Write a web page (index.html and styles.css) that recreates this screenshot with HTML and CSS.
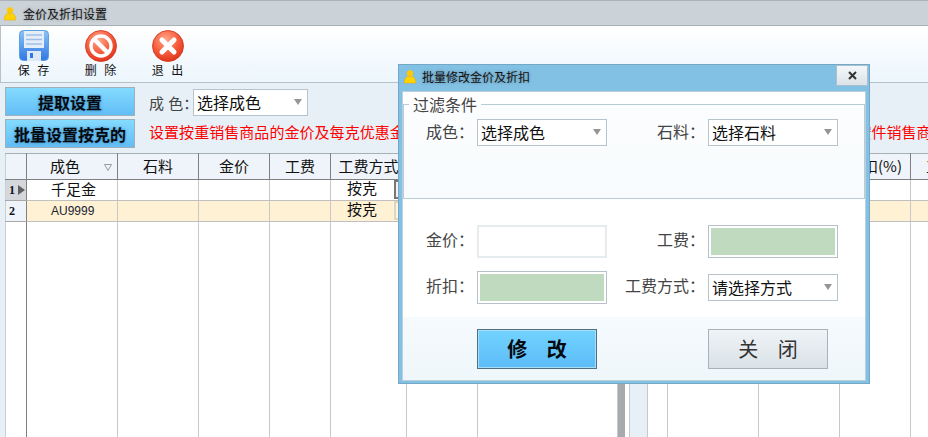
FILE: index.html
```html
<!DOCTYPE html>
<html lang="zh-CN">
<head>
<meta charset="utf-8">
<title>金价及折扣设置</title>
<link rel="stylesheet" href="styles.css">
</head>
<body>
<svg class="defs" width="0" height="0" aria-hidden="true">
  <defs>
    <symbol id="user" viewBox="0 0 16 16">
      <circle cx="8" cy="4.500" r="3.600" fill="#ffc800"/>
      <path d="M1.500 15.500C1.500 10.500 4 8 6 7.500L8 9l2-1.500C12 8 14.500 10.500 14.500 15.500Z" fill="#ffd400" stroke="#e9a800" stroke-width=".6"/>
    </symbol>
    <linearGradient id="floppyBody" x1="0" y1="0" x2="0" y2="1">
      <stop offset="0" stop-color="#8cc4f4"/><stop offset="1" stop-color="#2f77e4"/>
    </linearGradient>
    <radialGradient id="redBall" cx=".42" cy=".3" r=".8">
      <stop offset="0" stop-color="#ffa889"/><stop offset=".55" stop-color="#f4593a"/><stop offset="1" stop-color="#d92a12"/>
    </radialGradient>
  </defs>
</svg>

<header class="titlebar">
  <svg class="title-icon"><use href="#user"/></svg>
  <span class="title-text">金价及折扣设置</span>
</header>

<nav class="toolbar">
  <div class="tool">
    <svg class="tool-icon" viewBox="0 0 32 32">
      <rect x="1.500" y=".5" width="29" height="30" rx="4" fill="url(#floppyBody)" stroke="#5a9ee6"/>
      <rect x="6" y="1" width="20" height="17" fill="#e4eef9"/>
      <path d="M8 5h16M8 9.500h16M8 14h16" stroke="#9dbfe6" stroke-width="1.400"/>
      <rect x="9" y="21" width="14" height="10" fill="#dce9f7"/>
      <rect x="12" y="23" width="3" height="5" fill="#2f77e4"/>
    </svg>
    <span class="tool-label">保 存</span>
  </div>
  <div class="tool">
    <svg class="tool-icon" viewBox="0 0 32 32">
      <circle cx="16" cy="16" r="15.500" fill="url(#redBall)" stroke="#d2331c" stroke-width=".8"/>
      <circle cx="16" cy="16" r="10" fill="none" stroke="#fff" stroke-width="3.400"/>
      <path d="M9 9L23 23" stroke="#fff" stroke-width="4.400"/>
    </svg>
    <span class="tool-label">删 除</span>
  </div>
  <div class="tool">
    <svg class="tool-icon" viewBox="0 0 32 32">
      <circle cx="16" cy="16" r="15.500" fill="url(#redBall)" stroke="#d2331c" stroke-width=".8"/>
      <path d="M10 10L22 22M22 10L10 22" stroke="#fff" stroke-width="5" stroke-linecap="round"/>
    </svg>
    <span class="tool-label">退 出</span>
  </div>
</nav>

<section class="filters">
  <div class="side-buttons">
    <button class="blue-btn">提取设置</button>
    <button class="blue-btn">批量设置按克的</button>
  </div>
  <div class="filter-main">
    <div class="filter-row">
      <span class="filter-label">成 色：</span>
      <div class="select select-top">选择成色<i class="arrow"></i></div>
    </div>
    <p class="notice">设置按重销售商品的金价及每克优惠金额，及按克销售商品的工费和工费方式，同时可设置不同成色的金价按件销售商品的折扣</p>
  </div>
</section>

<main class="grid-wrap">
  <table class="grid">
    <colgroup>
      <col class="c-row"><col class="c-a"><col class="c-b"><col class="c-c"><col class="c-d"><col class="c-e"><col class="c-f"><col class="c-g"><col class="c-bar"><col class="c-gap"><col class="c-blue"><col class="c-h"><col class="c-i"><col class="c-j"><col class="c-k"><col class="c-l">
    </colgroup>
    <thead>
      <tr>
        <th></th>
        <th class="sortable">成色<svg class="sort" viewBox="0 0 8 7"><path d="M.5.500h7L4 6.500Z" fill="none" stroke="#999"/></svg></th>
        <th>石料</th><th>金价</th><th>工费</th><th>工费方式</th><th></th><th></th>
        <th class="bar"></th><th></th><th class="blue"></th><th></th><th></th><th></th><th>折扣(%)</th><th class="last">工费</th>
      </tr>
    </thead>
    <tbody>
      <tr class="row-one">
        <th class="row-head"><span class="row-no">1</span><i class="row-mark"></i></th>
        <td class="name">千足金</td><td></td><td></td><td></td>
        <td><div class="method">按克<i class="mini"></i></div></td>
        <td></td><td></td><td class="bar"></td><td></td><td class="blue"></td><td></td><td></td><td></td><td></td><td></td>
      </tr>
      <tr class="row-two">
        <th class="row-head"><span class="row-no">2</span></th>
        <td class="name latin">AU9999</td><td></td><td></td><td></td>
        <td><div class="method">按克<i class="mini"></i></div></td>
        <td></td><td></td><td class="bar"></td><td></td><td class="blue"></td><td></td><td></td><td></td><td></td><td></td>
      </tr>
      <tr class="filler">
        <th class="row-head"></th>
        <td></td><td></td><td></td><td></td><td></td><td></td><td></td><td class="bar"></td><td></td><td class="blue"></td><td></td><td></td><td></td><td></td><td></td>
      </tr>
    </tbody>
  </table>
</main>

<aside class="dialog">
  <div class="dialog-title">
    <svg class="title-icon"><use href="#user"/></svg>
    <span class="title-text">批量修改金价及折扣</span>
    <button class="close" aria-label="关闭">
      <svg viewBox="0 0 9 9" class="close-icon"><path d="M1 1L8 8M8 1L1 8" stroke="#333" stroke-width="2"/></svg>
    </button>
  </div>
  <div class="dialog-body">
    <fieldset class="group">
      <legend>过滤条件</legend>
      <div class="form-grid">
        <label>成色：</label>
        <div class="select">选择成色<i class="arrow"></i></div>
        <label>石料：</label>
        <div class="select">选择石料<i class="arrow"></i></div>
      </div>
    </fieldset>
    <div class="form-grid values">
      <label>金价：</label>
      <input class="input" type="text">
      <label>工费：</label>
      <input class="input green" type="text">
      <label>折扣：</label>
      <input class="input green" type="text">
      <label>工费方式：</label>
      <div class="select">请选择方式<i class="arrow"></i></div>
    </div>
    <div class="dialog-foot">
      <button class="foot-btn primary">修 改</button>
      <button class="foot-btn plain">关 闭</button>
    </div>
  </div>
</aside>
</body>
</html>
```

FILE: styles.css
```css
* { box-sizing: border-box; }
html, body { margin: 0; height: 100%; }
body {
  position: relative;
  width: 928px;
  height: 437px;
  overflow: hidden;
  background: #e8f0f7;
  font-family: "Noto Sans CJK SC", "Liberation Sans", sans-serif;
  color: #111;
  display: flex;
  flex-direction: column;
}
.defs { position: absolute; }

.titlebar {
  height: 26px;
  flex: none;
  display: flex;
  align-items: center;
  padding-left: 3px;
  gap: 6px;
  background: #ccd3d8;
  border-top: 1px solid #aab2b8;
  border-bottom: 1px solid #a9b1b6;
}
.title-icon { width: 14px; height: 17px; flex: none; }
.title-text {
  font-size: 12px;
  color: #111;
  text-shadow: 0 0 3px rgba(60, 70, 80, .55);
}

.toolbar {
  height: 57px;
  flex: none;
  display: flex;
  padding-top: 4px;
  background: linear-gradient(#ffffff, #ecf6fd);
  border-left: 1px solid #b8c2c8;
  border-bottom: 1px solid #b6c0c6;
}
.tool {
  width: 67px;
  display: flex;
  flex-direction: column;
  align-items: center;
}
.tool:first-child { margin-left: -1px; }
.tool-icon { width: 32px; height: 32px; flex: none; }
.tool-label {
  margin-top: 0;
  font-size: 12px;
  line-height: 16px;
  word-spacing: 5px;
  color: #111;
}

.filters {
  flex: none;
  height: 70px;
  display: flex;
  gap: 14px;
  padding: 4px 0 0 5px;
  overflow: hidden;
}
.side-buttons { width: 130px; flex: none; display: flex; flex-direction: column; gap: 3px; }
.blue-btn {
  width: 130px;
  height: 29px;
  padding: 0;
  border: 1px solid #a0b0ba;
  background: linear-gradient(#84dbff, #62bdf5);
  font: 700 16px/1 "Noto Sans CJK SC", sans-serif;
  color: #050a10;
  text-shadow: 0 0 3px rgba(0, 60, 110, .55);
}
.filter-main { flex: 1; min-width: 0; }
.filter-row { display: flex; align-items: center; margin-top: 2px; height: 27px; }
.filter-label { font-size: 15px; color: #444; width: 44px; white-space: nowrap; word-spacing: 1px; }
.notice {
  margin: 5px 0 0;
  font-size: 15px;
  line-height: 22px;
  letter-spacing: .05px;
  color: #f00;
  white-space: nowrap;
}

.select {
  position: relative;
  display: flex;
  align-items: center;
  width: 130px;
  height: 27px;
  padding: 0 0 1px 3px;
  font-size: 16px;
  color: #111;
  background: #fff;
  border: 1px solid #b8c4cc;
}
.select-top { width: 115px; }
.arrow {
  position: absolute;
  right: 5px;
  top: 9px;
  border: 4px solid transparent;
  border-top: 6px solid #959595;
  border-bottom: 0;
}

.grid-wrap {
  flex: 1;
  min-height: 0;
  padding-left: 5px;
  overflow: hidden;
}
.grid {
  table-layout: fixed;
  width: 996px;
  border-collapse: collapse;
  background: #fff;
  font-size: 15px;
}
.c-row { width: 21px; }
.c-a { width: 91px; }
.c-b { width: 81px; }
.c-c { width: 71px; }
.c-d { width: 61px; }
.c-e { width: 76px; }
.c-f { width: 71px; }
.c-g { width: 140px; }
.c-bar { width: 7px; }
.c-gap { width: 5px; }
.c-blue { width: 18px; }
.c-h { width: 20px; }
.c-i { width: 91px; }
.c-j { width: 81px; }
.c-k { width: 71px; }
.c-l { width: 91px; }

.grid thead th {
  height: 26px;
  padding: 0 0 3px;
  font-weight: 400;
  background: #eef4f9;
  border-top: 1px solid #a8b0b6;
  border-right: 1px solid #808080;
  border-bottom: 1px solid #808080;
  white-space: nowrap;
  overflow: hidden;
}
.grid thead th:first-child { border-left: 1px solid #c8d0d6; }
.grid thead .last { text-align: left; padding-left: 15px; }
.grid thead .sortable { position: relative; padding-right: 14px; }
.sort { position: absolute; right: 5px; top: 10px; width: 8px; height: 7px; }

.grid td {
  height: 21px;
  padding: 0;
  border-right: 1px solid #c8c8c8;
  border-bottom: 1px solid #c0c0c0;
}
.row-head {
  height: 21px;
  padding: 0 0 0 2px;
  border-left: 1px solid #c8d0d6;
  border-right: 1px solid #808080;
  border-bottom: 1px solid #a8a8a8;
  background: #eef4f9;
  text-align: left;
  font-size: 0;
}
.row-one .row-head { background: #d4d8dc; }
.row-two td { background: #fff2d4; }
.row-no { display: inline-block; font: 700 12px/16px "Liberation Serif", serif; color: #112; width: 10px; padding-left: 1px; vertical-align: middle; }
.row-mark {
  display: inline-block;
  vertical-align: middle;
  border: 5px solid transparent;
  border-left: 7px solid #606060;
  border-right: 0;
}
.grid .name { padding: 0 0 3px 24px; line-height: 1; white-space: nowrap; }
.grid .latin { padding-bottom: 0; font-family: "Liberation Sans", sans-serif; font-size: 12px; color: #223; }
.method {
  display: flex;
  justify-content: space-between;
  align-items: flex-start;
  padding-left: 16px;
  height: 20px;
  line-height: 16px;
}
.mini { width: 12px; height: 19px; background: #f2f2f2; border: 2px solid #777; border-right: 0; }
.row-two .mini { background: #fff6e2; border-color: #ded6c0; }
.grid .bar { background: #a6aaae; border-right: 0; border-bottom: 0; }
.grid .blue { background: #e8f0f7; border-left: 1px solid #c0ced8; border-bottom: 0; }
.grid .filler td { height: 216px; border-bottom: 0; }
.filler .row-head { border-bottom: 0; background: #fff; }

.dialog {
  position: absolute;
  left: 398px;
  top: 64px;
  width: 472px;
  height: 320px;
  display: flex;
  flex-direction: column;
  background: #82c1e3;
  border: 1px solid #74a8c6;
  padding: 0 3px 2px;
}
.dialog-title {
  position: relative;
  height: 26px;
  flex: none;
  display: flex;
  align-items: center;
  gap: 5px;
  padding: 0 0 3px 1px;
}
.close {
  position: absolute;
  right: -2px;
  top: 0;
  width: 32px;
  height: 21px;
  padding: 0;
  display: flex;
  align-items: center;
  justify-content: center;
  background: linear-gradient(#f4f7f9, #dbe3e8);
  border: 1px solid #a9c0ce;
}
.close-icon { width: 9px; height: 9px; }
.dialog-body {
  flex: 1;
  display: flex;
  flex-direction: column;
  background: #fff;
  border: 1px solid #bcd0dc;
}
.group {
  margin: 3px 0 0;
  padding: 6px 0 0;
  min-width: 0;
  height: 104px;
  flex: none;
  background: linear-gradient(#fcfdfe, #f7fbfd);
  border: 1px solid #b8ccd8;
}
.group legend {
  margin-left: 5px;
  padding: 0 4px;
  font-size: 16px;
  line-height: 18px;
  color: #444;
}
.form-grid {
  display: grid;
  grid-template-columns: 73px 130px 101px 130px;
  align-items: center;
}
.form-grid label {
  font-size: 16px;
  color: #444;
  text-align: right;
  white-space: nowrap;
  padding: 0 3px 3px 0;
}
.values {
  margin: 26px 0 0 1px;
  row-gap: 13px;
}
.values label { padding-bottom: 6px; }
.input {
  width: 130px;
  height: 33px;
  margin: 0;
  background: #fff;
  border: 2px solid #e6ecee;
  outline: 0;
}
.green {
  background: #c0dac0;
  border: 1px solid #b8c0ca;
  box-shadow: inset 0 0 0 2px #fff;
}
.dialog-foot {
  margin-top: auto;
  height: 63px;
  flex: none;
  display: flex;
  gap: 111px;
  padding: 12px 0 0 74px;
  background: linear-gradient(#f5fafd, #eff7fb);
}
.foot-btn {
  width: 120px;
  height: 40px;
  padding: 0;
  font-size: 20px;
  font-family: "Noto Sans CJK SC", sans-serif;
  line-height: 1;
  word-spacing: 15px;
}
.primary {
  font-weight: 700;
  color: #050a10;
  background: linear-gradient(#72d3ff, #5cbcf8);
  border: 1px solid #4f6f82;
  box-shadow: inset 0 0 0 1px #a8def6;
}
.plain {
  color: #333;
  background: linear-gradient(#eef3f6, #dae2e7);
  border: 1px solid #a8b2b8;
}
```
